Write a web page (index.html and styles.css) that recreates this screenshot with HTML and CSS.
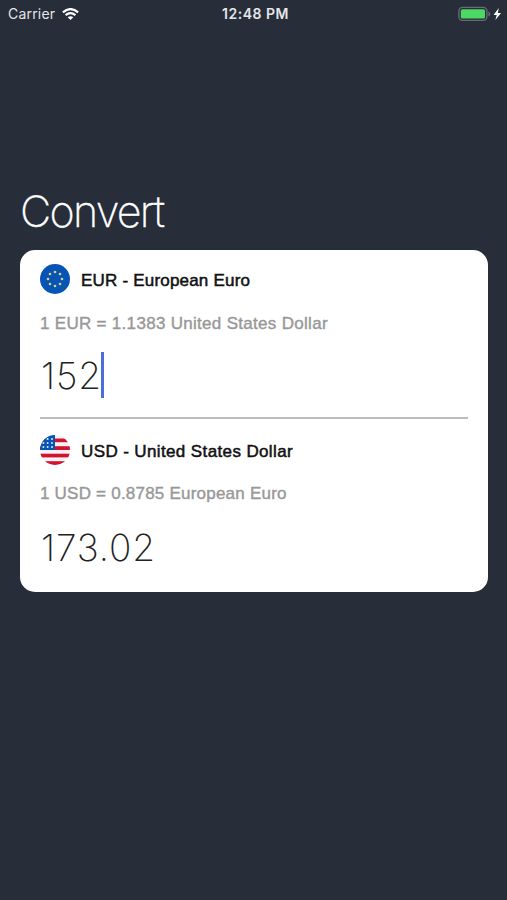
FILE: index.html
```html
<!DOCTYPE html>
<html lang="en">

<head>
    <meta charset="UTF-8">
    <meta name="viewport" content="width=device-width, initial-scale=1.0">
    <title>Convert</title>
    <link rel="stylesheet" href="styles.css">
</head>

<body>

    <!-- Status bar -->
    <div class="status-bar">
        <div class="status-left">
            <span class="carrier">Carrier</span>
            <svg class="wifi-icon" width="17" height="12" viewBox="0 0 17 12">
                <path d="M0.9 4.3 Q8.5 -2.1 16.1 4.3" fill="none" stroke="#fff" stroke-width="2.2" />
                <path d="M3.6 7.2 Q8.5 3.2 13.4 7.2" fill="none" stroke="#fff" stroke-width="2.2" />
                <path d="M5.7 9.3 Q8.5 7.1 11.3 9.3 L8.5 12 Z" fill="#fff" />
            </svg>
        </div>
        <span class="time">12:48 PM</span>
        <div class="status-right">
            <svg width="44" height="16" viewBox="0 0 44 16">
                <rect x="0.9" y="1.4" width="28" height="13" rx="3.6" fill="none" stroke="#666b75" stroke-width="1.4" />
                <rect x="2.8" y="3.3" width="24.2" height="9.2" rx="1.6" fill="#4bd964" />
                <path d="M30.4 5.5 Q32.4 6.2 32.4 8 Q32.4 9.8 30.4 10.5 Z" fill="#666b75" />
                <path d="M40.8 2 L35.6 8.9 H38.7 L37.4 14 L43 6.9 H39.8 Z" fill="#fff" />
            </svg>
        </div>
    </div>

    <h1 class="title">Convert</h1>

    <!-- Converter card -->
    <div class="card">
        <div class="currency">
            <div class="currency-header">
                <svg class="flag" viewBox="0 0 30 30">
                    <circle cx="15" cy="15" r="15" fill="#0854b4" />
                    <g fill="#d6d07f">
                        <circle cx="15" cy="8" r="1.3" />
                        <circle cx="20" cy="10" r="1.3" />
                        <circle cx="22" cy="15" r="1.3" />
                        <circle cx="20" cy="20" r="1.3" />
                        <circle cx="15" cy="22" r="1.3" />
                        <circle cx="10" cy="20" r="1.3" />
                        <circle cx="8" cy="15" r="1.3" />
                        <circle cx="10" cy="10" r="1.3" />
                    </g>
                </svg>
                <span class="name name-eur">EUR - European Euro</span>
            </div>
            <p class="rate rate-eur">1 EUR = 1.1383 United States Dollar</p>
            <div class="amount"><span>152</span><i class="caret"></i></div>
        </div>

        <div class="currency">
            <div class="currency-header">
                <svg class="flag" viewBox="0 0 30 30">
                    <clipPath id="round"><circle cx="15" cy="15" r="15" /></clipPath>
                    <g clip-path="url(#round)">
                        <rect width="30" height="30" fill="#f5f3f6" />
                        <g fill="#d3122f">
                            <rect y="3.5" width="30" height="3.7" />
                            <rect y="11.2" width="30" height="3.8" />
                            <rect y="18.7" width="30" height="3.7" />
                            <rect y="26.2" width="30" height="3.8" />
                        </g>
                        <rect width="15" height="15" fill="#0854b4" />
                        <g fill="#dbe6f5">
                            <circle cx="7.6" cy="4" r="1" />
                            <circle cx="12" cy="4" r="1" />
                            <circle cx="3.4" cy="8" r="1" />
                            <circle cx="7.6" cy="8" r="1" />
                            <circle cx="12" cy="8" r="1" />
                            <circle cx="3.4" cy="12" r="1" />
                            <circle cx="7.6" cy="12" r="1" />
                            <circle cx="12" cy="12" r="1" />
                        </g>
                    </g>
                </svg>
                <span class="name name-usd">USD - United States Dollar</span>
            </div>
            <p class="rate rate-usd">1 USD = 0.8785 European Euro</p>
            <div class="amount"><span>173.02</span></div>
        </div>
    </div>

</body>
</html>
```

FILE: styles.css
```css
* {
    box-sizing: border-box;
}

body {
    margin: 0;
    min-height: 900px;
    font-family: "Liberation Sans", Arial, sans-serif;
    background-color: #272d39;
}

/* Status bar */
.status-bar {
    display: grid;
    grid-template-columns: 1fr auto 1fr;
    align-items: center;
    height: 27px;
    padding: 0 5px 0 8px;
    font-family: Inter, sans-serif;
    font-size: 14px;
    color: #e4e6ea;
}

.status-left {
    display: flex;
    align-items: center;
    gap: 7px;
}

.carrier {
    letter-spacing: 0.2px;
}

.time {
    padding-left: 1px;
    font-weight: 600;
    letter-spacing: 0.5px;
}

.status-right {
    display: flex;
    justify-content: flex-end;
}

.title {
    margin: 156px 0 0 20px;
    height: 56px;
    line-height: 56px;
    font-family: Inter, sans-serif;
    font-size: 43px;
    font-weight: 200;
    letter-spacing: -1.7px;
    color: #fff;
    -webkit-text-stroke: 0.3px #fff;
}

/* Converter card */
.card {
    margin: 11px 19px 0 20px;
    height: 342px;
    padding: 0 20px;
    background-color: #fff;
    border-radius: 15px;
}

.currency {
    height: 167px;
    padding-top: 14px;
}

.currency + .currency {
    height: 175px;
    padding-top: 16px;
    border-top: 2px solid #bdbdbd;
}

.currency-header {
    display: flex;
    align-items: center;
    gap: 11px;
    height: 30px;
}

.flag {
    width: 30px;
    height: 30px;
}

.name {
    padding-top: 3px;
    font-size: 17px;
    color: #111;
    -webkit-text-stroke: 0.5px #111;
    white-space: nowrap;
}

.name-eur {
    letter-spacing: 0.2px;
}

.name-usd {
    letter-spacing: 0.38px;
}

.rate {
    margin: 19px 0 0;
    height: 20px;
    line-height: 20px;
    font-size: 17px;
    color: #989898;
    -webkit-text-stroke: 0.4px #989898;
    white-space: nowrap;
}

.rate-eur {
    padding-top: 1px;
    letter-spacing: 0.3px;
}

.rate-usd {
    letter-spacing: 0.22px;
}

.amount {
    display: flex;
    align-items: center;
    height: 48px;
    margin-top: 18px;
    padding-left: 1px;
    font-family: Inter, sans-serif;
    font-size: 37px;
    font-weight: 200;
    letter-spacing: 0.9px;
    color: #222;
}

.currency + .currency .amount {
    margin-top: 19px;
}

.caret {
    width: 3px;
    height: 46px;
    margin-left: -1px;
    background-color: #4a6fdc;
}
```
